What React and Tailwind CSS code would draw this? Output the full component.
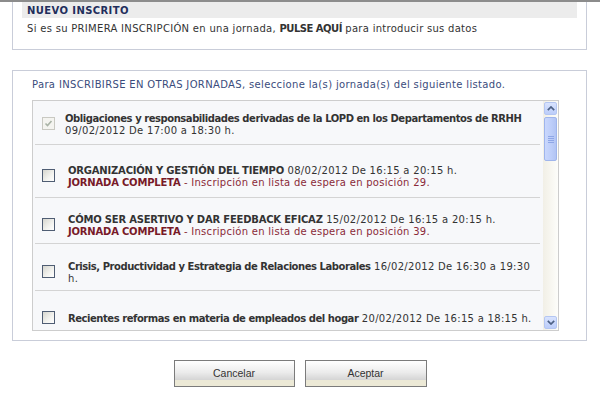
import React from "react";

function Checkbox({ disabled }) {
  if (disabled) {
    return (
      <div className="w-[13px] h-[13px] shrink-0 border border-[#c9c9c2] bg-[#f4f4f0] flex items-center justify-center">
        <svg width="9" height="9" viewBox="0 0 9 9">
          <path d="M1.5 4.5 L3.5 6.5 L7.5 2" fill="none" stroke="#a9b3a6" strokeWidth="1.6" />
        </svg>
      </div>
    );
  }
  return (
    <div className="w-[13px] h-[13px] shrink-0 border border-[#4f5d73] bg-[linear-gradient(135deg,#d6d6cf_0%,#f3f3ef_60%,#ffffff_100%)]" />
  );
}

function ArrowUp() {
  return (
    <svg width="8" height="5" viewBox="0 0 8 5">
      <path d="M0.8 4.2 L4 1 L7.2 4.2" fill="none" stroke="#4d6185" strokeWidth="1.7" />
    </svg>
  );
}

function ArrowDown() {
  return (
    <svg width="8" height="5" viewBox="0 0 8 5">
      <path d="M0.8 0.8 L4 4 L7.2 0.8" fill="none" stroke="#4d6185" strokeWidth="1.7" />
    </svg>
  );
}

function Scrollbar() {
  return (
    <div className="w-[15px] shrink-0 h-full flex flex-col bg-[linear-gradient(to_right,#f1efe6,#fdfdfa)]">
      <div className="mt-[1px] ml-[1px] w-[13px] h-[13px] rounded-[2px] border border-[#b4c6f2] bg-[linear-gradient(to_bottom,#d8e3fe,#bccdfa)] flex items-center justify-center">
        <ArrowUp />
      </div>
      <div className="mt-[2px] ml-[1px] w-[13px] h-[44px] rounded-[2px] border border-[#9fb5ec] bg-[linear-gradient(to_right,#c9d7fd,#bccdf9_60%,#b2c4f3)] flex flex-col items-center justify-center gap-[1px]">
        <div className="w-[6px] h-[1px] bg-[#8ea6e6]" />
        <div className="w-[6px] h-[1px] bg-[#8ea6e6]" />
        <div className="w-[6px] h-[1px] bg-[#8ea6e6]" />
        <div className="w-[6px] h-[1px] bg-[#8ea6e6]" />
      </div>
      <div className="flex-1" />
      <div className="mb-[1px] ml-[1px] w-[13px] h-[13px] rounded-[2px] border border-[#b4c6f2] bg-[linear-gradient(to_bottom,#d8e3fe,#bccdfa)] flex items-center justify-center">
        <ArrowDown />
      </div>
    </div>
  );
}

function Red({ n }) {
  return (
    <div className="whitespace-nowrap">
      <span className="font-bold text-[#781a28] tracking-[-0.2px]">JORNADA COMPLETA</span>
      <span className="text-[#8a2a38] tracking-[0.28px]"> - Inscripción en lista de espera en posición {n}.</span>
    </div>
  );
}

function BoldCaps({ children }) {
  return <span className="font-bold tracking-[-0.2px]">{children}</span>;
}

function Bold({ children }) {
  return <span className="font-bold tracking-[-0.45px]">{children}</span>;
}

function Norm({ children }) {
  return <span className="tracking-[0.3px]">{children}</span>;
}

export default function App() {
  return (
    <div className="w-[600px] h-[395px] bg-white overflow-hidden font-['DejaVu_Sans',Verdana,sans-serif] text-[10px] leading-[12px] text-[#333333]">
      <div className="h-[2px] bg-[#8c8c8c]" />

      <div className="ml-[12px] w-[575px] h-[48px] border-x border-b border-[#c9cdd9]">
        <div className="mx-[9px] h-[16px] bg-[#ececec] pl-[5px] pt-[1px] leading-[16px] font-bold text-[#1f2e5c] tracking-[0.4px]">
          NUEVO INSCRITO
        </div>
        <div className="mt-[5px] pl-[14px] whitespace-nowrap">
          <span className="tracking-[0.3px]">Si es su PRIMERA INSCRIPCIÓN en una jornada, </span>
          <span className="font-bold tracking-[-0.5px]">PULSE AQUÍ</span>
          <span className="tracking-[0.28px]"> para introducir sus datos</span>
        </div>
      </div>

      <div className="mt-[20px] ml-[12px] w-[575px] h-[271px] border border-[#c9cdd9]">
        <div className="pt-[8px] pl-[19px] whitespace-nowrap text-[#3a4c7c] tracking-[0.35px]">
          Para INSCRIBIRSE EN OTRAS JORNADAS, seleccione la(s) jornada(s) del siguiente listado.
        </div>

        <div className="mt-[9px] ml-[19px] w-[527px] h-[231px] border border-[#cdcdcd] bg-[#f7f8fa] flex overflow-hidden">
          <div className="flex-1 pl-[2px] pr-[3px] overflow-hidden">
            <div className="flex items-center pt-[9px] pb-[7px] border-b border-[#d4d4d4]">
              <div className="ml-[7px]">
                <Checkbox disabled />
              </div>
              <div className="ml-[10px] pt-[3px] whitespace-nowrap">
                <div><Bold>Obligaciones y responsabilidades derivadas de la LOPD en los Departamentos de RRHH</Bold></div>
                <div><Norm>09/02/2012 De 17:00 a 18:30 h.</Norm></div>
              </div>
            </div>

            <div className="flex items-center pt-[17px] pb-[8px] border-b border-[#d4d4d4]">
              <div className="ml-[7px]">
                <Checkbox />
              </div>
              <div className="ml-[13px] pt-[3px] whitespace-nowrap">
                <div><BoldCaps>ORGANIZACIÓN Y GESTIÓN DEL TIEMPO</BoldCaps><Norm> 08/02/2012 De 16:15 a 20:15 h.</Norm></div>
                <Red n={29} />
              </div>
            </div>

            <div className="flex items-center pt-[13px] pb-[5px] border-b border-[#d4d4d4]">
              <div className="ml-[7px]">
                <Checkbox />
              </div>
              <div className="ml-[13px] pt-[3px] whitespace-nowrap">
                <div><BoldCaps>CÓMO SER ASERTIVO Y DAR FEEDBACK EFICAZ</BoldCaps><Norm> 15/02/2012 De 16:15 a 20:15 h.</Norm></div>
                <Red n={39} />
              </div>
            </div>

            <div className="flex items-center pt-[14px] pb-[5px] border-b border-[#d4d4d4]">
              <div className="ml-[7px]">
                <Checkbox />
              </div>
              <div className="ml-[13px] pt-[3px] whitespace-nowrap">
                <div><Bold>Crisis, Productividad y Estrategia de Relaciones Laborales</Bold><Norm> 16/02/2012 De 16:30 a 19:30</Norm></div>
                <div><Norm>h.</Norm></div>
              </div>
            </div>

            <div className="flex items-center pt-[19px] pb-[5px]">
              <div className="ml-[7px]">
                <Checkbox />
              </div>
              <div className="ml-[13px] pt-[3px] whitespace-nowrap">
                <div><Bold>Recientes reformas en materia de empleados del hogar</Bold><Norm> 20/02/2012 De 16:15 a 18:15 h.</Norm></div>
              </div>
            </div>
          </div>
          <Scrollbar />
        </div>
      </div>

      <div className="mt-[19px] flex justify-center gap-[10px] font-['Liberation_Sans',Arial,sans-serif] text-[10.5px] text-[#333333]">
        <button className="w-[121px] h-[27px] border border-[#7b7b7b] bg-[linear-gradient(to_bottom,#ffffff_0%,#ececec_45%,#d6d6d6_74%,#ece9d6_76%,#ece9d6_100%)] flex items-center justify-center pb-[2px]">
          Cancelar
        </button>
        <button className="w-[122px] h-[27px] border border-[#7b7b7b] bg-[linear-gradient(to_bottom,#ffffff_0%,#ececec_45%,#d6d6d6_74%,#ece9d6_76%,#ece9d6_100%)] flex items-center justify-center pb-[2px]">
          Aceptar
        </button>
      </div>
    </div>
  );
}
